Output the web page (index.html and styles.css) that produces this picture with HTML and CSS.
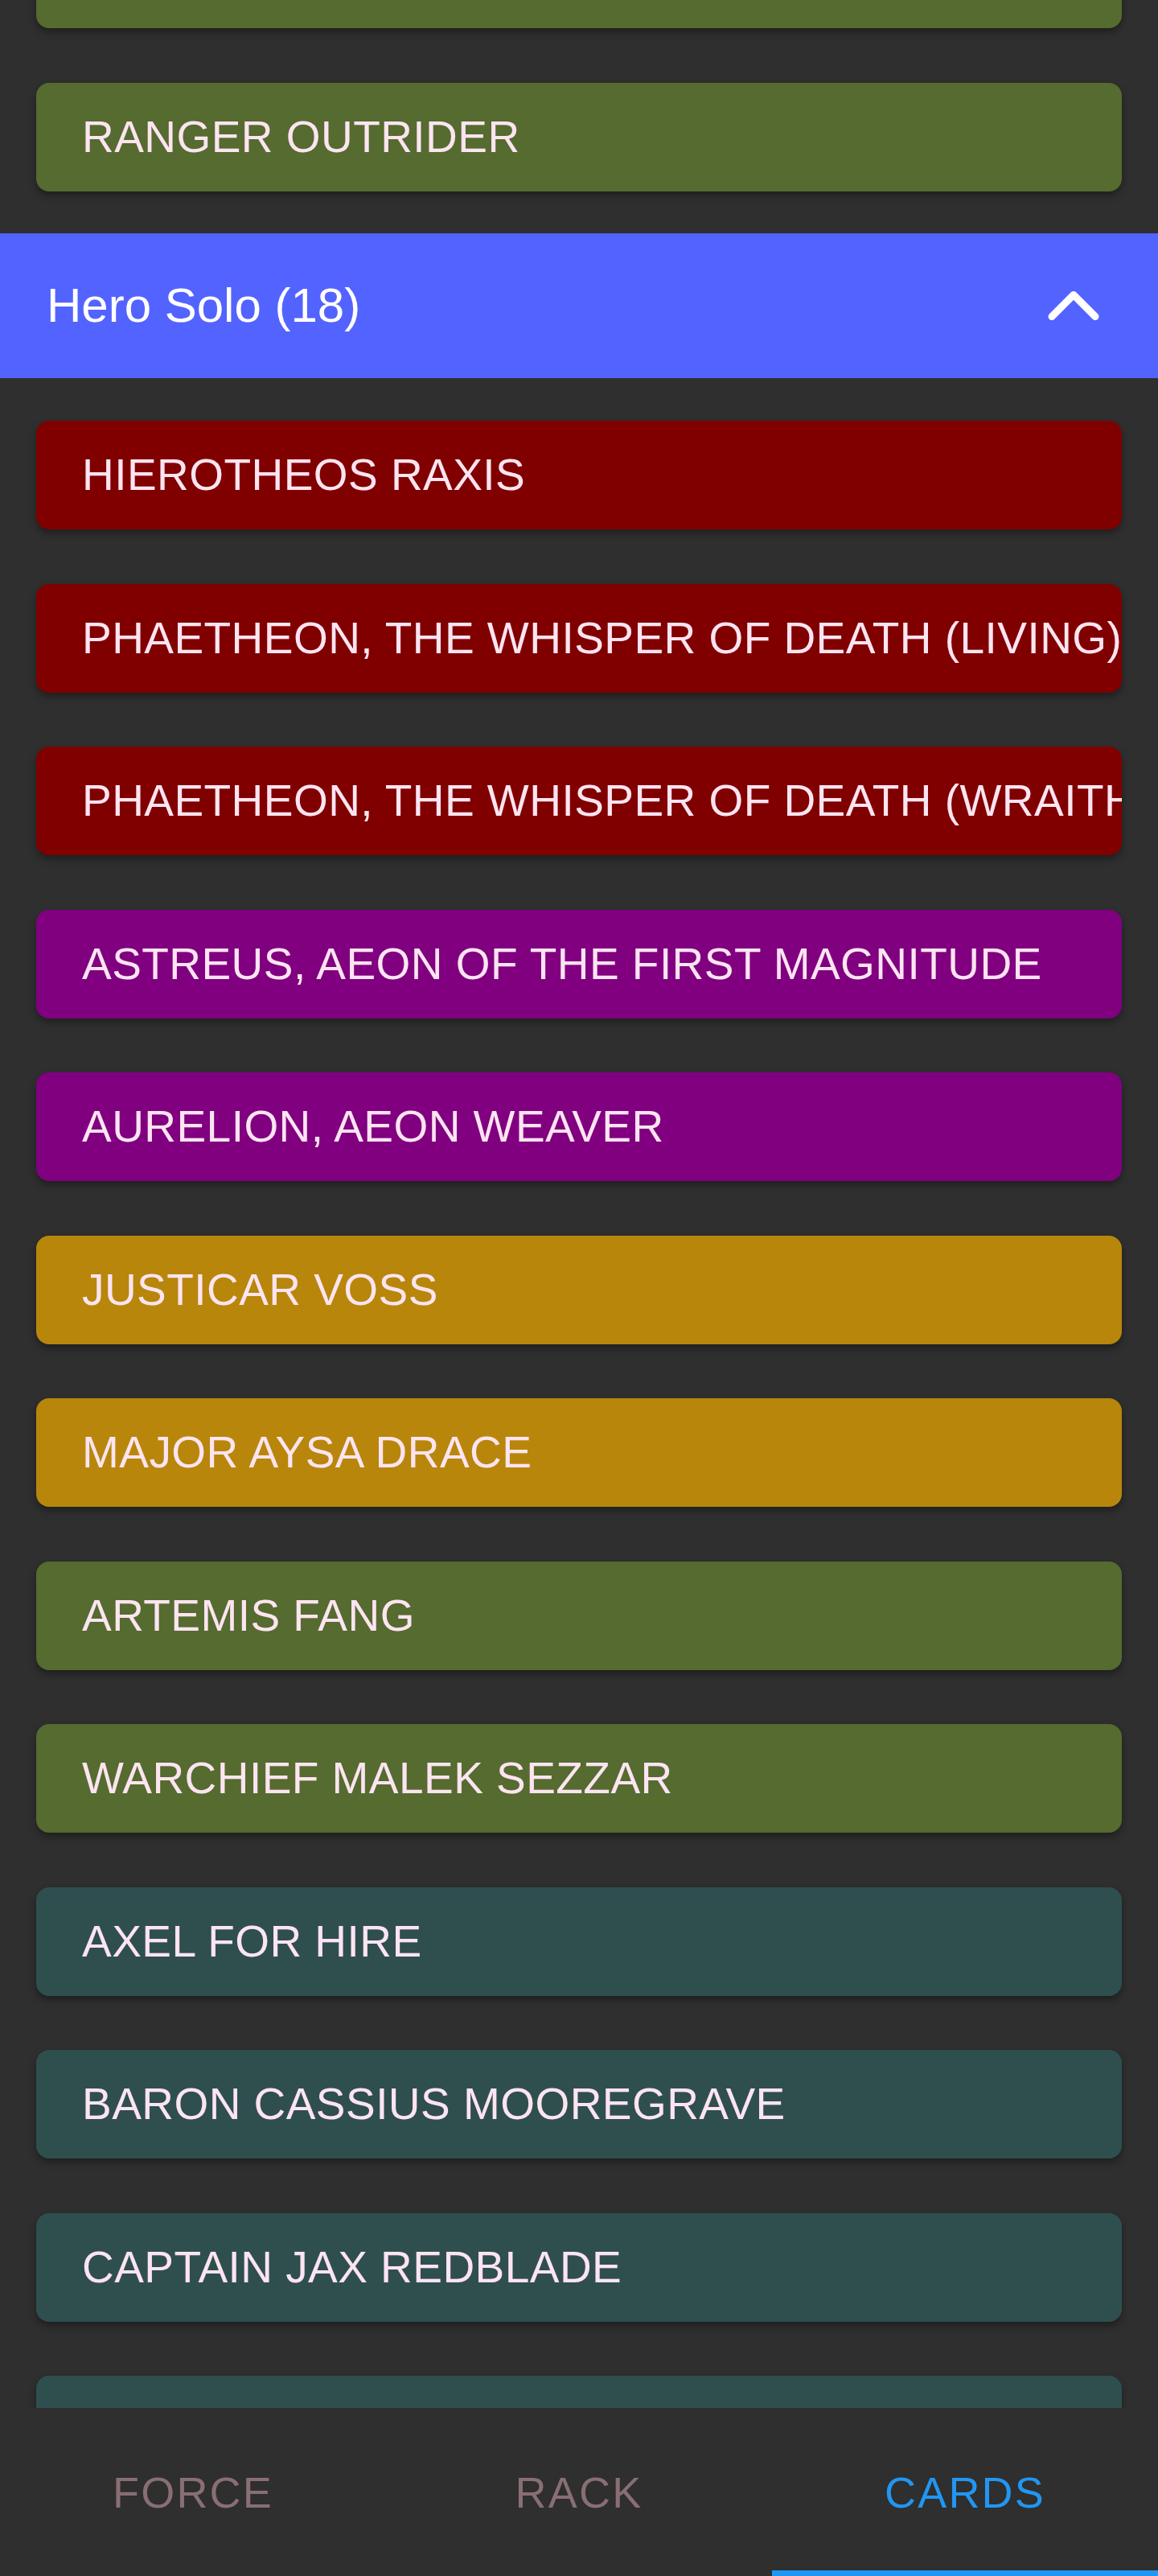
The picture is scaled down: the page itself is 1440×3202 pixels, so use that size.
FILE: index.html
```html
<!DOCTYPE html>
<html lang="en">
<head>
<meta charset="utf-8">
<title>Cards</title>
<link rel="stylesheet" href="styles.css">
</head>
<body>
<div class="screen">
  <main class="viewport">
    <div class="scroll">
      <section class="group group-top">
        <div class="card green"></div>
        <div class="card green"><span class="card-label">RANGER OUTRIDER</span></div>
      </section>
      <header class="section-header">
        <span class="section-title">Hero Solo (18)</span>
        <svg class="chevron" viewBox="0 0 24 24" width="108" height="108" aria-hidden="true">
          <polyline points="18 15 12 9 6 15" fill="none" stroke="#ffffff" stroke-width="2" stroke-linecap="round" stroke-linejoin="round"/>
        </svg>
      </header>
      <section class="group group-list">
        <div class="card red"><span class="card-label">HIEROTHEOS RAXIS</span></div>
        <div class="card red"><span class="card-label">PHAETHEON, THE WHISPER OF DEATH (LIVING)</span></div>
        <div class="card red"><span class="card-label">PHAETHEON, THE WHISPER OF DEATH (WRAITH)</span></div>
        <div class="card purple"><span class="card-label">ASTREUS, AEON OF THE FIRST MAGNITUDE</span></div>
        <div class="card purple"><span class="card-label">AURELION, AEON WEAVER</span></div>
        <div class="card gold"><span class="card-label">JUSTICAR VOSS</span></div>
        <div class="card gold"><span class="card-label">MAJOR AYSA DRACE</span></div>
        <div class="card green"><span class="card-label">ARTEMIS FANG</span></div>
        <div class="card green"><span class="card-label">WARCHIEF MALEK SEZZAR</span></div>
        <div class="card teal"><span class="card-label">AXEL FOR HIRE</span></div>
        <div class="card teal"><span class="card-label">BARON CASSIUS MOOREGRAVE</span></div>
        <div class="card teal"><span class="card-label">CAPTAIN JAX REDBLADE</span></div>
        <div class="card teal"></div>
      </section>
    </div>
  </main>
  <nav class="tabs">
    <div class="tab"><span class="tab-label">FORCE</span></div>
    <div class="tab"><span class="tab-label">RACK</span></div>
    <div class="tab active"><span class="tab-label">CARDS</span></div>
  </nav>
</div>
</body>
</html>
```

FILE: styles.css
```css
* {
  box-sizing: border-box;
}

html, body {
  margin: 0;
  padding: 0;
  background: #2e2f2e;
}

body {
  font-family: "Liberation Sans", Arial, sans-serif;
}

.screen {
  width: 1440px;
  height: 3202px;
  display: flex;
  flex-direction: column;
  background: #2e2f2e;
  overflow: hidden;
}

.viewport {
  flex: 1 1 auto;
  min-height: 0;
  overflow: hidden;
}

.scroll {
  margin-top: -100px;
  display: flex;
  flex-direction: column;
}

.group {
  display: flex;
  flex-direction: column;
  gap: 67.5px;
  padding: 0 45px;
}

.group-top {
  padding-bottom: 52.5px;
}

.group-list {
  padding-top: 53px;
}

.card {
  height: 135px;
  flex: 0 0 135px;
  border-radius: 16px;
  display: flex;
  align-items: center;
  padding-left: 57px;
  overflow: hidden;
  white-space: nowrap;
  box-shadow: 0 5px 10px rgba(0, 0, 0, 0.35);
}

.card-label {
  color: #fde4f1;
  font-size: 55px;
  letter-spacing: 0.45px;
  line-height: 1;
}

.green { background: #556b2f; }
.red { background: #800000; }
.purple { background: #800080; }
.gold { background: #b8860b; }
.teal { background: #2f4f4f; }

.section-header {
  height: 180px;
  background: #5363ff;
  display: flex;
  align-items: center;
  justify-content: space-between;
  padding: 0 51px 0 58px;
}

.section-title {
  color: #ffffff;
  font-size: 60px;
  line-height: 1;
}

.chevron {
  display: block;
  width: 108px;
  height: 108px;
}

.tabs {
  flex: 0 0 209px;
  height: 209px;
  display: flex;
  background: #2e2f2e;
}

.tab {
  flex: 1 1 0;
  display: flex;
  align-items: center;
  justify-content: center;
  border-bottom: 7px solid transparent;
  padding-top: 7px;
}

.tab.active {
  border-bottom-color: #2196f3;
}

.tab-label {
  font-size: 54px;
  letter-spacing: 2.2px;
  line-height: 1;
  color: #896e74;
}

.tab.active .tab-label {
  color: #2196f3;
}
```
